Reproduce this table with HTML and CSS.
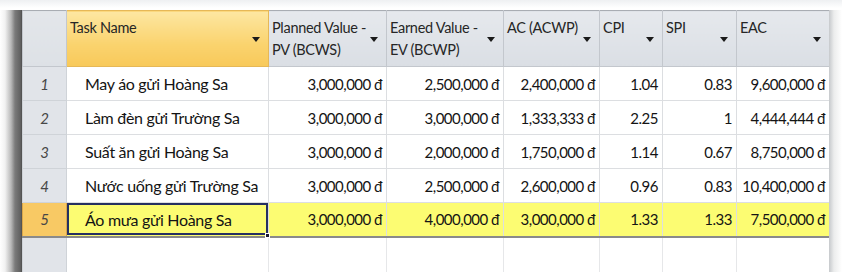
FILE: index.html
```html
<!DOCTYPE html>
<html lang="vi">
<head>
<meta charset="utf-8">
<title>Earned Value</title>
<link rel="stylesheet" href="styles.css">
</head>
<body>
<div class="screen">
  <div class="shade-left"></div>
  <div class="sheet">
    <table class="grid">
      <colgroup>
        <col class="c-id"><col class="c-task"><col class="c-pv"><col class="c-ev"><col class="c-ac"><col class="c-cpi"><col class="c-spi"><col class="c-eac">
      </colgroup>
      <thead>
        <tr>
          <th class="corner"></th>
          <th class="hdr active"><span class="htxt">Task Name</span><span class="arrow"></span></th>
          <th class="hdr"><span class="htxt">Planned Value -<br>PV (BCWS)</span><span class="arrow"></span></th>
          <th class="hdr"><span class="htxt">Earned Value -<br>EV (BCWP)</span><span class="arrow"></span></th>
          <th class="hdr"><span class="htxt">AC (ACWP)</span><span class="arrow"></span></th>
          <th class="hdr"><span class="htxt">CPI</span><span class="arrow"></span></th>
          <th class="hdr"><span class="htxt">SPI</span><span class="arrow"></span></th>
          <th class="hdr"><span class="htxt">EAC</span><span class="arrow"></span></th>
        </tr>
      </thead>
      <tbody>
        <tr>
          <td class="id">1</td><td class="task">May áo gửi Hoàng Sa</td><td class="num">3,000,000 đ</td><td class="num">2,500,000 đ</td><td class="num">2,400,000 đ</td><td class="num">1.04</td><td class="num">0.83</td><td class="num">9,600,000 đ</td>
        </tr>
        <tr>
          <td class="id">2</td><td class="task">Làm đèn gửi Trường Sa</td><td class="num">3,000,000 đ</td><td class="num">3,000,000 đ</td><td class="num">1,333,333 đ</td><td class="num">2.25</td><td class="num">1</td><td class="num">4,444,444 đ</td>
        </tr>
        <tr>
          <td class="id">3</td><td class="task">Suất ăn gửi Hoàng Sa</td><td class="num">3,000,000 đ</td><td class="num">2,000,000 đ</td><td class="num">1,750,000 đ</td><td class="num">1.14</td><td class="num">0.67</td><td class="num">8,750,000 đ</td>
        </tr>
        <tr>
          <td class="id">4</td><td class="task">Nước uống gửi Trường Sa</td><td class="num">3,000,000 đ</td><td class="num">2,500,000 đ</td><td class="num">2,600,000 đ</td><td class="num">0.96</td><td class="num">0.83</td><td class="num">10,400,000 đ</td>
        </tr>
        <tr class="sel">
          <td class="id">5</td><td class="task"><div class="cursor">Áo mưa gửi Hoàng Sa<span class="handle"></span></div></td><td class="num">3,000,000 đ</td><td class="num">4,000,000 đ</td><td class="num">3,000,000 đ</td><td class="num">1.33</td><td class="num">1.33</td><td class="num">7,500,000 đ</td>
        </tr>
        <tr class="blank">
          <td class="id"></td><td></td><td></td><td></td><td></td><td></td><td></td><td></td>
        </tr>
      </tbody>
    </table>
  </div>
  <div class="shade-right"></div>
</div>
</body>
</html>
```
FILE: styles.css
```css
* { box-sizing: border-box; }
html, body { margin: 0; padding: 0; background: #fff; }
.screen {
  width: 842px;
  height: 272px;
  overflow: hidden;
  display: flex;
  padding-top: 10px;
  background: linear-gradient(#eef0f2, #fff 8px);
  font-family: Lato, "Open Sans", sans-serif;
}
.shade-left {
  width: 22px;
  flex: none;
  background: linear-gradient(to right, #fff 0, #f2f2f2 5px, #b9b9b9 11px, #7a7a7a 15px, #5e5e5e 21px, #4a4a4a 22px);
}
.shade-right {
  width: 13px;
  flex: none;
  background: linear-gradient(to right, #c6c9cc 0, #eceded 5px, #fff 13px);
}
.sheet { width: 807px; flex: none; }
.grid {
  border-collapse: collapse;
  table-layout: fixed;
  width: 807px;
  color: #141414;
}
.c-id { width: 44px; }
.c-task { width: 202px; }
.c-pv { width: 118px; }
.c-ev { width: 117px; }
.c-ac { width: 96px; }
.c-cpi { width: 63px; }
.c-spi { width: 74px; }
.c-eac { width: 93px; }

thead th {
  height: 56px;
  border: 1px solid #c3c7cd;
  border-top-color: #a9adb3;
  background: linear-gradient(#e6e9ed, #dadee4);
  vertical-align: top;
  text-align: left;
  font-weight: normal;
  position: relative;
  padding: 0;
}
.corner { background: linear-gradient(#e3e6ea, #dde1e6); }
.hdr.active {
  background: linear-gradient(#fde7a2, #fad36e 60%, #f8c95a);
  border-color: #e6b857;
}
.htxt {
  display: block;
  padding: 6px 0 0 3px;
  font-size: 14.5px;
  line-height: 22px;
  color: #262626;
  letter-spacing: -0.3px;
}
.arrow {
  position: absolute;
  right: 8px;
  top: 26px;
  width: 0;
  height: 0;
  border-left: 4px solid transparent;
  border-right: 4px solid transparent;
  border-top: 5px solid #1a1a1a;
}

tbody td {
  height: 34px;
  border: 1px solid #dcdee1;
  background: #fff;
  font-size: 16px;
  letter-spacing: -0.3px;
  padding: 0 5px;
  white-space: nowrap;
}
td.id {
  background: #e1e4e9;
  border-color: #cfd3d8;
  text-align: center;
  font-style: italic;
  color: #474747;
  font-size: 15px;
}
td.task { padding-left: 18px; }
td.num {
  text-align: right;
  font-size: 15px;
  letter-spacing: -0.5px;
  padding-right: 4px;
}

tr.sel td {
  background: #fcfc72;
  border-top: 1px solid #7b7b7b;
  border-bottom: 2px solid #8a8a8a;
}
tr.sel td.id {
  background: #f8c964;
  border-color: #d9a64a;
  border-top: 1px solid #7b7b7b;
  border-bottom: 2px solid #8a8a8a;
}
tr.sel td.task { padding: 0; }
.cursor {
  position: relative;
  height: 32px;
  border: 2px solid #263061;
  padding-left: 16px;
  display: flex;
  align-items: center;
}
.handle {
  position: absolute;
  right: -4px;
  bottom: -5px;
  width: 5px;
  height: 5px;
  background: #1c1c2e;
  border: 1px solid #fff;
}
tr.blank td {
  height: 40px;
  border-top: none;
  border-bottom: none;
  border-color: #e6e7e9;
}
tr.blank td.id { background: #e1e4e9; border-color: #cfd3d8; }
```
